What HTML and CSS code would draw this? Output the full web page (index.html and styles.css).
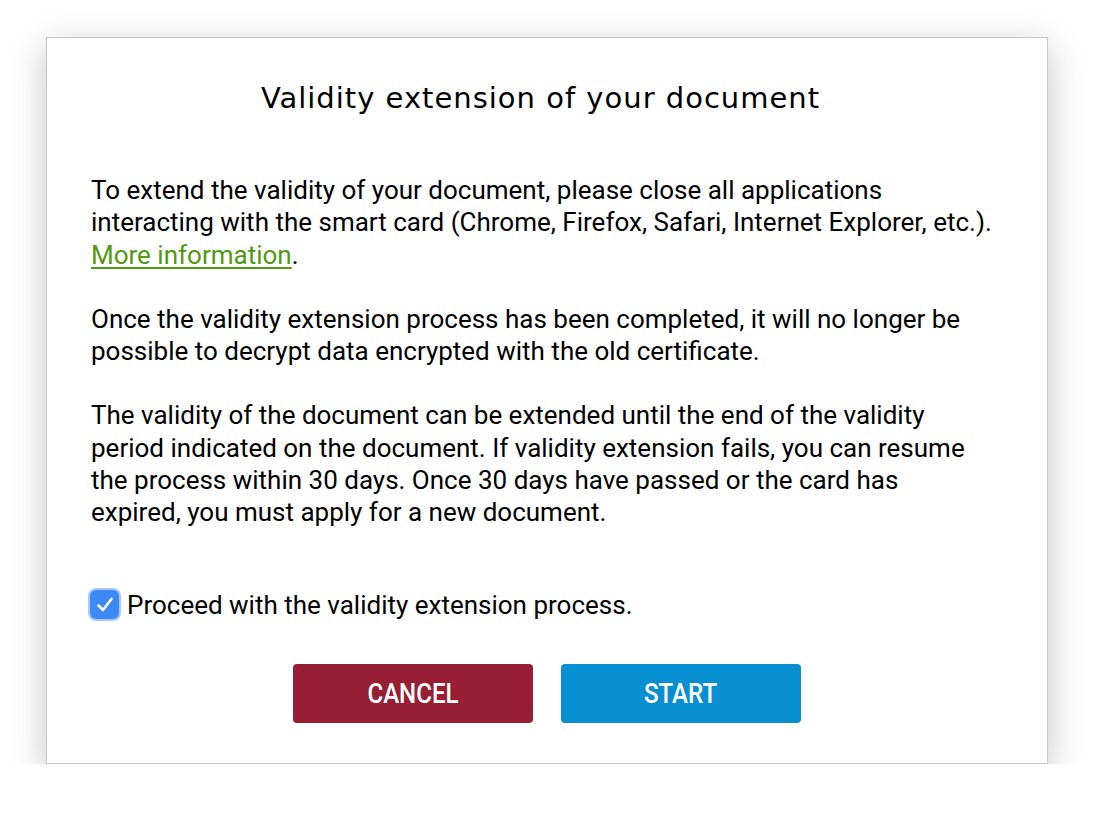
FILE: index.html
```html
<!DOCTYPE html>
<html lang="en">
<head>
  <meta charset="UTF-8">
  <meta name="viewport" content="width=device-width, initial-scale=1.0">
  <title>Validity extension</title>
  <link rel="stylesheet" href="styles.css">
</head>
<body>
  <div class="dialog">
    <h1>Validity extension of your document</h1>
    <p>To extend the validity of your document, please close all applications interacting with the smart card (Chrome, Firefox, Safari, Internet Explorer, etc.). <a href="#">More information</a>.</p>
    <p>Once the validity extension process has been completed, it will no longer be possible to decrypt data encrypted with the old certificate.</p>
    <p>The validity of the document can be extended until the end of the validity period indicated on the document. If validity extension fails, you can resume the process within 30 days. Once 30 days have passed or the card has expired, you must apply for a new document.</p>
    <label class="check">
      <span class="box">
        <svg width="24" height="24" viewBox="0 0 24 24"><path d="M5.5 12.5 L10 17 L18.5 6" fill="none" stroke="#fff" stroke-width="2.6" stroke-linecap="round" stroke-linejoin="round"/></svg>
      </span>
      Proceed with the validity extension process.
    </label>
    <div class="actions">
      <button class="button cancel"><span>CANCEL</span></button>
      <button class="button start"><span>START</span></button>
    </div>
  </div>
</body>
</html>
```

FILE: styles.css
```css
body { margin: 0; background: #fff; font-family: Roboto, "Liberation Sans", sans-serif; color: #000; }
.dialog { width: 1000px; height: 725px; margin: 37px auto 0; border: 1px solid #c9c9c9; background: #fff; box-shadow: 0 10px 34px rgba(0,0,0,0.24); }
h1 { margin: 0; padding: 40px 13px 0 0; text-align: center; font-family: "DejaVu Sans", sans-serif; font-weight: normal; font-size: 29px; line-height: 40px; letter-spacing: 1px; }
p { margin: 0 53px 0 44px; font-size: 26px; line-height: 32.3px; }
p:first-of-type { margin-top: 56px; }
p + p { margin-top: 32px; }
a { color: #4f9a10; text-decoration: underline; text-underline-offset: 3px; }
.check { display: flex; align-items: center; gap: 8px; margin: 60px 0 0 43px; font-size: 26px; line-height: 32px; }
.box { width: 29px; height: 29px; border-radius: 6px; background: #3e8af5; box-shadow: 0 0 0 2px #a9c8fb; display: flex; align-items: center; justify-content: center; }
.box svg { display: block; }
.actions { display: flex; justify-content: center; gap: 28px; margin-top: 43px; }
.button { width: 240px; height: 59px; border: none; border-radius: 4px; color: #fff; font-family: Roboto, sans-serif; font-weight: 500; font-size: 28px; cursor: pointer; padding: 0; }
.button span { display: inline-block; transform: scaleX(0.86); }
.cancel { background: #981f33; }
.start { background: #088fd2; }
```
